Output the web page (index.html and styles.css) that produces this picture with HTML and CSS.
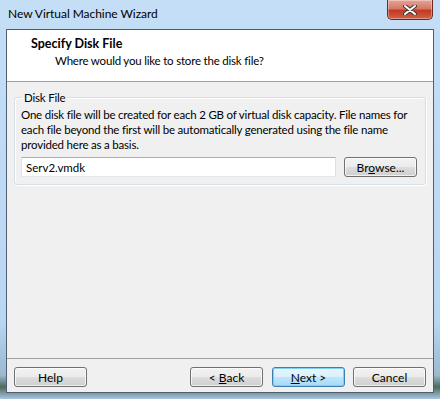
FILE: index.html
```html
<!DOCTYPE html>
<html lang="en">
<head>
    <meta charset="UTF-8">
    <title>New Virtual Machine Wizard</title>
    <link rel="stylesheet" href="styles.css">
</head>
<body>
    <div class="window">
        <div class="titlebar">
            <span class="title">New Virtual Machine Wizard</span>
            <button class="close" aria-label="Close">
                <svg width="14" height="10" viewBox="0 0 14 10">
                    <path d="M2 1 L12 9 M12 1 L2 9" stroke="#3a3a3a" stroke-width="4" stroke-linecap="round"/>
                    <path d="M2 1 L12 9 M12 1 L2 9" stroke="#fff" stroke-width="2" stroke-linecap="round"/>
                </svg>
            </button>
        </div>

        <div class="client">
            <div class="header">
                <h1>Specify Disk File</h1>
                <p>Where would you like to store the disk file?</p>
            </div>

            <div class="content">
                <fieldset class="group">
                    <legend>Disk File</legend>
                    <p>One disk file will be created for each 2 GB of virtual disk capacity. File names for each file beyond the first will be automatically generated using the file name provided here as a basis.</p>
                    <div class="file-row">
                        <input type="text" class="file-input" value="Serv2.vmdk">
                        <button class="btn browse">Br<u>o</u>wse...</button>
                    </div>
                </fieldset>
            </div>

            <div class="footer">
                <button class="btn">Help</button>
                <div class="nav-buttons">
                    <button class="btn">&lt; <u>B</u>ack</button>
                    <button class="btn default"><u>N</u>ext &gt;</button>
                    <button class="btn">Cancel</button>
                </div>
            </div>
        </div>
    </div>
</body>
</html>
```

FILE: styles.css
```css
body {
    margin: 0;
    font-family: Lato, "Open Sans", sans-serif;
    font-size: 11.5px;
    letter-spacing: -0.2px;
    color: #000;
    background: #bcd8f4;
}

.window {
    width: 440px;
    height: 399px;
    display: flex;
    flex-direction: column;
    background: linear-gradient(to bottom, #c4def6 0%, #b9d6f3 80%, #9cb9d2 94%, #4d6a5a 97%, #a8c6e2 100%);
}

.titlebar {
    height: 29px;
    display: flex;
    justify-content: space-between;
    align-items: flex-start;
    padding-left: 8px;
    padding-right: 7px;
}

.title {
    font-size: 12px;
    letter-spacing: -0.05px;
    margin-top: 6px;
    color: #000;
}

.close {
    width: 46px;
    height: 20px;
    padding: 0;
    border: 1px solid #6e2a20;
    border-top: none;
    border-radius: 0 0 5px 5px;
    background: linear-gradient(to bottom, #e6a497 0%, #d47966 45%, #c23a22 55%, #d06149 100%);
    box-shadow: inset 0 0 0 1px rgba(255, 255, 255, 0.35);
    display: flex;
    align-items: center;
    justify-content: center;
}

.client {
    margin: 0 6px;
    height: 362px;
    border: 1px solid #4f5e70;
    background: #f0f0f0;
    display: flex;
    flex-direction: column;
}

.header {
    background: #fff;
    height: 52px;
    border-bottom: 1px solid #a0a0a0;
    box-sizing: border-box;
}

.header h1 {
    font-size: 12.5px;
    font-weight: bold;
    letter-spacing: 0;
    margin: 6px 0 0 24px;
}

.header p {
    margin: 3px 0 0 48px;
}

.content {
    flex: 1;
    padding: 9px 7px 0 7px;
}

.group {
    margin: 0;
    padding: 0 8px 7px 6px;
    border: 1px solid #d5dfe5;
    border-radius: 3px;
    box-shadow: inset 1px 1px 0 #fff, 1px 1px 0 #fff;
}

.group legend {
    padding: 0 2px;
    margin-left: 1px;
}

.group p {
    margin: 3px 0 5px 0;
    line-height: 15px;
}

.file-row {
    display: flex;
    gap: 8px;
}

.file-input {
    flex: 1;
    height: 20px;
    box-sizing: border-box;
    margin: 0;
    padding: 0 4px;
    font: inherit;
    border: 1px solid #abadb3;
    border-color: #abadb3 #dbdfe6 #e3e9ef #e2e3ea;
    background: #fff;
    outline: none;
}

.btn {
    width: 73px;
    height: 20px;
    padding: 0;
    margin: 0;
    font: inherit;
    font-size: 12px;
    letter-spacing: 0;
    color: #000;
    border: 1px solid #707070;
    border-radius: 3px;
    background: linear-gradient(to bottom, #f2f2f2 0%, #ebebeb 50%, #dddddd 51%, #cfcfcf 100%);
    box-shadow: inset 0 0 0 1px rgba(255, 255, 255, 0.7);
}

.btn u {
    text-decoration: underline;
}

.btn.default {
    border-color: #3c7fb1;
    background: linear-gradient(to bottom, #eaf6fd 0%, #d9f0fc 50%, #bee6fd 51%, #a7d9f5 100%);
    box-shadow: inset 0 0 0 1px #7ed0f5;
}

.footer {
    height: 34px;
    box-sizing: border-box;
    border-top: 1px solid #a0a0a0;
    padding: 8px 7px 0 7px;
    display: flex;
    justify-content: space-between;
    align-items: flex-start;
}

.nav-buttons {
    display: flex;
    gap: 8px;
}

.nav-buttons .btn:first-child {
    margin-right: 1px;
}
```
